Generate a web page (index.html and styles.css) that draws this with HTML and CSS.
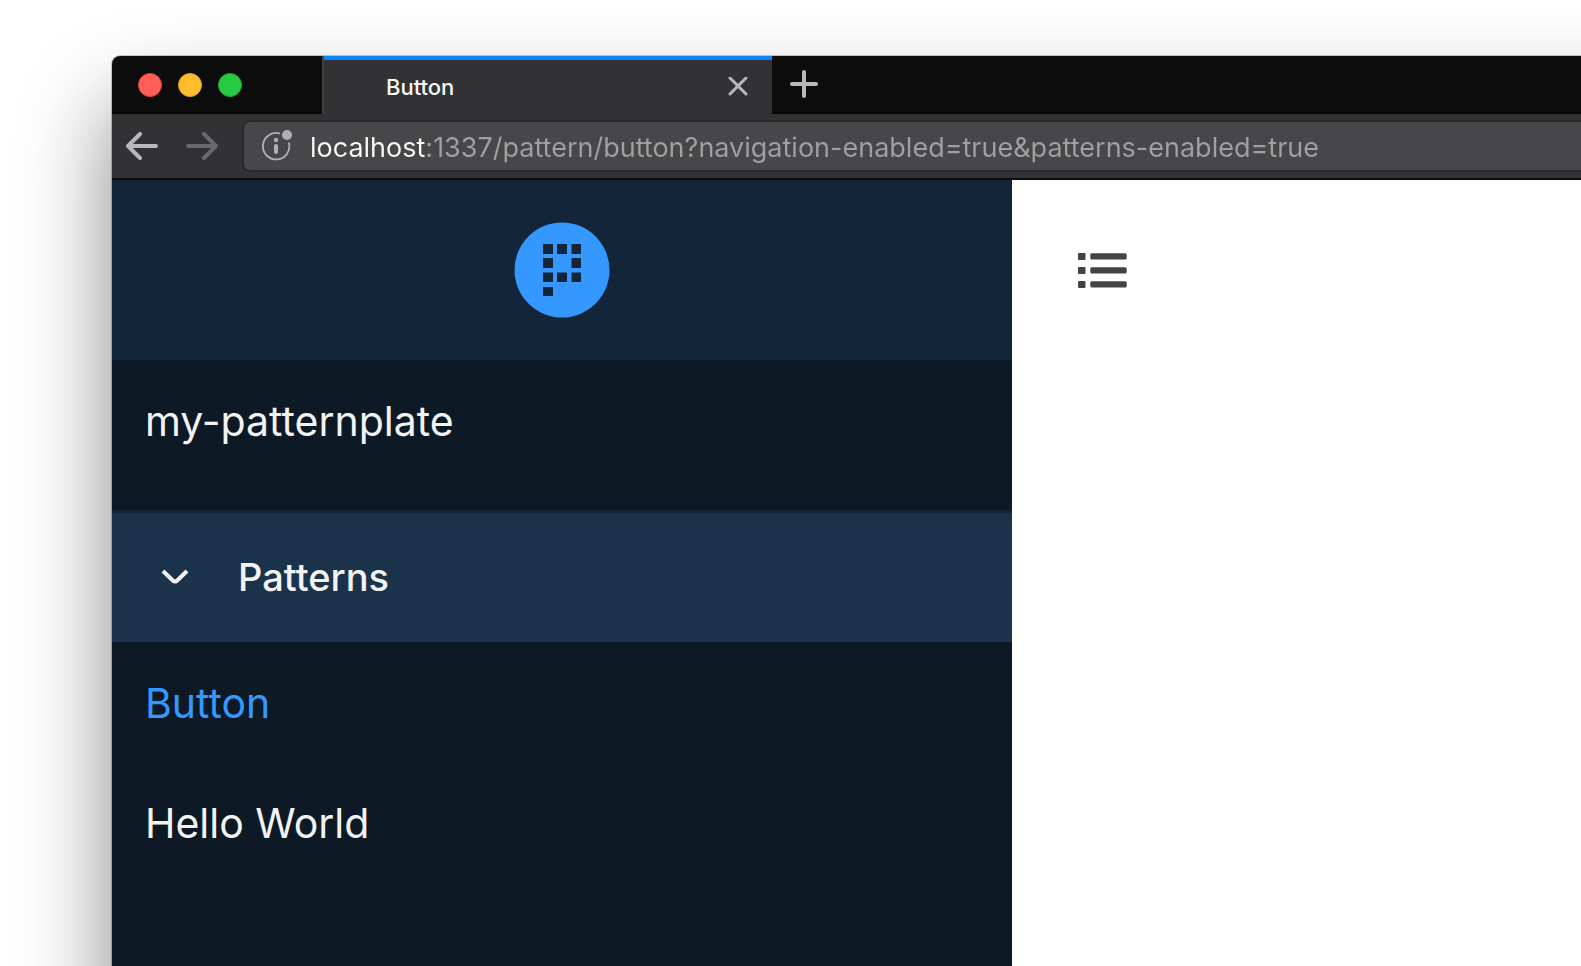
FILE: index.html
```html
<!DOCTYPE html>
<html lang="en">
<head>
<meta charset="utf-8">
<title>Button</title>
<link rel="stylesheet" href="styles.css">
</head>
<body>
<div class="window">
  <header class="tabstrip">
    <div class="lights">
      <button class="light light-close" aria-label="Close window"></button>
      <button class="light light-minimize" aria-label="Minimize window"></button>
      <button class="light light-zoom" aria-label="Zoom window"></button>
    </div>
    <div class="tab">
      <span class="tab-title">Button</span>
      <button class="icon-button" aria-label="Close tab">
        <svg width="20" height="20" viewBox="0 0 20 20"><path d="M2 1L18 17M18 1L2 17"/></svg>
      </button>
    </div>
    <button class="icon-button new-tab" aria-label="New tab">
      <svg width="28" height="28" viewBox="0 0 28 28"><path d="M14 2V26M2 14H26"/></svg>
    </button>
  </header>
  <div class="toolbar">
    <button class="icon-button" aria-label="Back">
      <svg width="32" height="28" viewBox="0 0 32 28"><path d="M30 14H3M14 2L2 14L14 26"/></svg>
    </button>
    <button class="icon-button forward" aria-label="Forward" disabled>
      <svg width="32" height="28" viewBox="0 0 32 28"><path d="M2 14H29M18 2L30 14L18 26"/></svg>
    </button>
    <div class="urlbar">
      <svg class="info" width="32" height="32" viewBox="0 0 32 32" aria-hidden="true">
        <path class="info-ring" d="M18 3.600A13.200 13.200 0 1 0 26.800 12.500"/>
        <circle cx="25" cy="5" r="5"/>
        <circle cx="14" cy="10" r="2.200"/>
        <rect x="12" y="14" width="4" height="10" rx="2"/>
      </svg>
      <input class="url" type="text" aria-label="Address" value="localhost:1337/pattern/button?navigation-enabled=true&amp;patterns-enabled=true">
    </div>
  </div>
  <div class="page">
    <aside class="sidebar">
      <a class="brand" href="#" aria-label="Home">
        <svg width="96" height="96" viewBox="0 0 96 96">
          <circle cx="48" cy="48" r="47.500"/>
          <path class="brand-mark" d="M29 22h10v10H29zM43 22h10v10H43zM57.500 22h9.500v10H57.500zM29 36h10v10H29zM57.500 36h9.500v10H57.500zM29 50.500h10v9.500H29zM43 50.500h10v9.500H43zM57.500 50.500h9.500v9.500H57.500zM29 65h10v9H29z"/>
        </svg>
      </a>
      <a class="item project" href="#">my-patternplate</a>
      <button class="section" aria-expanded="true">
        <svg width="28" height="18" viewBox="0 0 28 18"><path d="M2 3L11.500 12.200Q14 14.600 16.500 12.200L26 3"/></svg>
        <span>Patterns</span>
      </button>
      <nav class="list">
        <a class="item active" href="#">Button</a>
        <a class="item" href="#">Hello World</a>
      </nav>
    </aside>
    <main class="content">
      <button class="icon-button menu" aria-label="Toggle navigation">
        <svg width="50" height="38" viewBox="0 0 50 38"><rect x="0" y="1" width="7.500" height="7" rx="1"/><rect x="0" y="15" width="7.500" height="7" rx="1"/><rect x="0" y="29" width="7.500" height="7" rx="1"/><rect x="12.300" y="1.200" width="36.400" height="6.400" rx="1.500"/><rect x="12.300" y="15.200" width="36.400" height="6.400" rx="1.500"/><rect x="12.300" y="29.200" width="36.400" height="6.400" rx="1.500"/></svg>
      </button>
    </main>
  </div>
</div>
</body>
</html>
```
FILE: styles.css
```css
* {
  box-sizing: border-box;
}

body {
  display: flex;
  margin: 0;
  min-height: 100vh;
  padding: 56px 0 0 112px;
  overflow: hidden;
  background: #fff;
  font-family: Inter, "Liberation Sans", sans-serif;
}

button {
  margin: 0;
  padding: 0;
  border: 0;
  background: none;
  font: inherit;
  color: inherit;
}

a {
  color: inherit;
  text-decoration: none;
}

svg {
  display: block;
}

.window {
  position: relative;
  display: flex;
  flex-direction: column;
  flex: 1;
}

/* The shadow continues past the right and bottom edges of the desktop. */
.window::before {
  content: "";
  position: absolute;
  z-index: -1;
  inset: 0 -200px -200px 0;
  border-radius: 8px;
  box-shadow: 0 0 0 1px rgba(0, 0, 0, 0.2), 0 50px 90px rgba(0, 0, 0, 0.48);
}

.tabstrip {
  display: flex;
  height: 58px;
  background: #0c0c0d;
  border-bottom: 2px solid #060606;
  border-top-left-radius: 8px;
}

.lights {
  display: flex;
  align-items: center;
  gap: 16px;
  width: 210px;
  padding: 2px 0 0 26px;
}

.light {
  width: 24px;
  height: 24px;
  border-radius: 50%;
}

.light-close {
  background: #ff5f57;
  border: 1px solid #e2463f;
}

.light-minimize {
  background: #ffbd2e;
  border: 1px solid #e0a01f;
}

.light-zoom {
  background: #28ca42;
  border: 1px solid #1bac2c;
}

.tab {
  display: flex;
  align-items: center;
  justify-content: space-between;
  width: 450px;
  height: 58px;
  padding: 3px 24px 0 62px;
  background: #323234;
  border-left: 2px solid #414143;
  box-shadow: inset 0 4px #0a84ff;
  color: #f9f9fa;
}

.tab-title {
  font-size: 22px;
  font-weight: 500;
  line-height: 28px;
}

.icon-button svg {
  fill: none;
  stroke: #b8b8ba;
  stroke-width: 4;
  stroke-linecap: round;
  stroke-linejoin: round;
}

.tab .icon-button svg {
  stroke-width: 3;
}

.new-tab {
  padding-left: 18px;
}

.toolbar {
  display: flex;
  align-items: center;
  height: 66px;
  padding-left: 14px;
  background: #323234;
  border-bottom: 2px solid #0c0c0d;
}

.forward {
  padding: 0 24px 0 28px;
}

.forward svg {
  stroke: #69696b;
}

.urlbar {
  display: flex;
  align-items: center;
  flex: 1;
  gap: 16px;
  height: 52px;
  padding-left: 18px;
  background: #474749;
  border: 2px solid #29292b;
  border-right: 0;
  border-radius: 8px 0 0 8px;
}

.info {
  flex: none;
  fill: #b1b1b3;
}

.info-ring {
  fill: none;
  stroke: #b1b1b3;
  stroke-width: 1.8;
}

/* The host part is painted brighter than the rest of the address. */
.url {
  flex: 1;
  padding: 3px 0 0;
  border: 0;
  outline: 0;
  font-family: inherit;
  font-size: 27px;
  font-weight: 420;
  line-height: 36px;
  color: #a0a0a2;
  background: linear-gradient(90deg, #f9f9fa 116px, #a0a0a2 116px);
  background-clip: text;
  -webkit-background-clip: text;
  -webkit-text-fill-color: transparent;
}

.page {
  display: flex;
  flex: 1;
}

.sidebar {
  width: 900px;
  background: #0d1924;
  color: #f2f2f2;
}

.brand {
  display: flex;
  align-items: center;
  justify-content: center;
  height: 180px;
  background: #132539;
  fill: #3498ff;
}

.brand-mark {
  fill: #132539;
}

.item {
  display: block;
  padding: 37px 33px 35px;
  font-size: 41px;
  line-height: 48px;
}

.project {
  height: 150px;
}

.section {
  display: flex;
  align-items: center;
  gap: 49px;
  width: 100%;
  height: 132px;
  padding: 0 0 2px 49px;
  background: #1a334b;
  border-top: 3px solid #132539;
  font-size: 38px;
  font-weight: 500;
}

.section svg {
  fill: none;
  stroke: #f2f2f2;
  stroke-width: 4;
}

.active {
  color: #3498ff;
}

.content {
  flex: 1;
  padding: 72px 66px;
  background: #fff;
}

.menu svg {
  fill: #444;
  stroke: none;
}
```
